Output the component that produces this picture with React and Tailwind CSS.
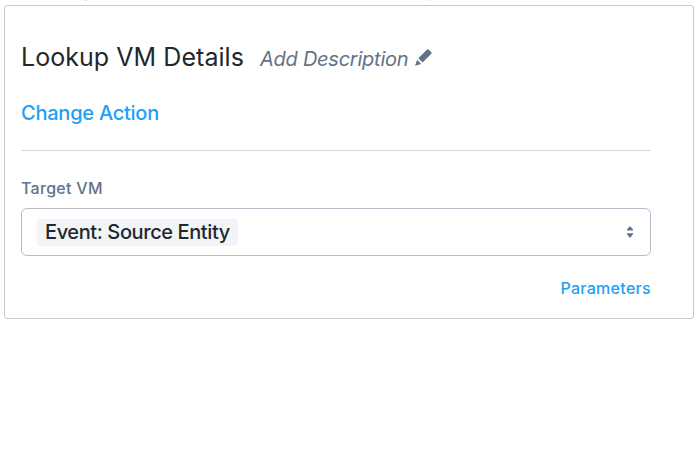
function PencilIcon() {
  return (
    <svg className="mt-px h-[17px] w-[17px] shrink-0" viewBox="0 0 16 16" fill="#627386" aria-hidden="true">
      <path d="M11.2.7a1.3 1.3 0 0 1 1.8 0l2.2 2.2a1.3 1.3 0 0 1 0 1.8L7.1 12.8 3.1 8.8z" />
      <path d="M2 10.2 5.8 14 0 15.8z" />
    </svg>
  );
}

function SelectArrows() {
  return (
    <svg className="h-3 w-2 shrink-0" viewBox="0 0 8 12" fill="#627386" aria-hidden="true">
      <path d="M3.5.4h1L7 3.6v1H1v-1zM1 7.2h6v1l-2.5 3.2h-1L1 8.2z" />
    </svg>
  );
}

export default function App() {
  return (
    <main className="h-[452px] w-[698px] overflow-hidden bg-white pl-1 font-['Inter',sans-serif] whitespace-nowrap">
      <div className="flex h-[5px] items-start gap-[341px] pl-20">
        <span className="h-px w-[3px] bg-[#e6e6e6]" />
        <span className="h-px w-[3px] bg-[#eeeeee]" />
      </div>
      <section className="flex h-[314px] w-[690px] flex-col rounded-[3px] border border-[#c9c9cb] pt-[35px] pr-[42px] pl-4">
        <header className="flex h-8 items-center">
          <h1 className="w-[239px] text-[25px] leading-8 tracking-[0.05px] text-[#22272e]">Lookup VM Details</h1>
          <button className="flex items-center text-[#627386]">
            <span className="w-[155px] pt-[3px] text-left text-[20px] leading-7 tracking-[-0.25px] italic">Add Description</span>
            <PencilIcon />
          </button>
        </header>
        <a className="mt-[26px] h-7 text-[20px] leading-7 font-medium tracking-[-0.24px] text-[#22a0f5]">Change Action</a>
        <hr className="mt-[23px] border-[#d3d9e0]" />
        <label className="mt-[25px] h-6 text-[16px] leading-6 font-medium tracking-[0.3px] text-[#627386]">Target VM</label>
        <div className="mt-2 flex h-12 items-center justify-between rounded-[6px] border border-[#b8bfca] pr-4 pl-[15px]">
          <span className="h-[27px] w-[201px] rounded-[3px] bg-[#f2f4f6] pl-2 text-[20px] leading-[27px] font-medium tracking-[-0.4px] text-[#22272e]">Event: Source Entity</span>
          <SelectArrows />
        </div>
        <a className="mt-5 h-6 self-end text-[16px] leading-6 font-medium tracking-[0.3px] text-[#22a0f5]">Parameters</a>
      </section>
    </main>
  );
}
